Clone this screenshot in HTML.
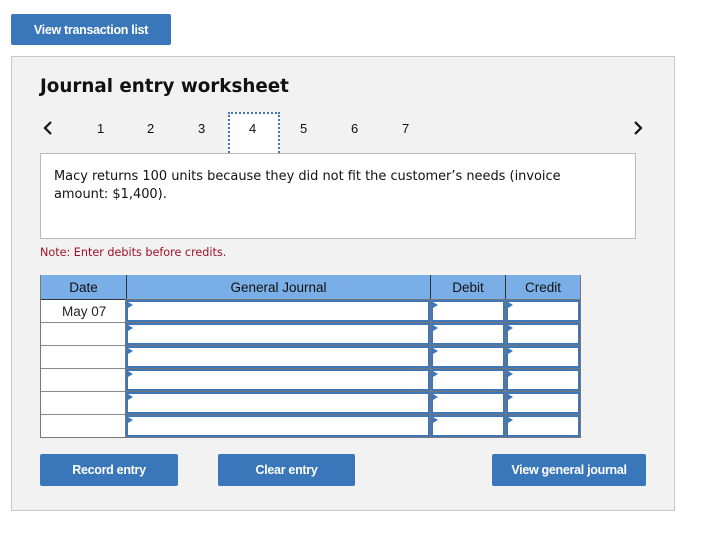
<!DOCTYPE html>
<html><head><style>
*{margin:0;padding:0;box-sizing:border-box}
body{width:709px;height:538px;background:#fff;position:relative;overflow:hidden;font-family:"Liberation Sans",Arial,sans-serif}
.btn{position:absolute;background:#3a76ba;color:#fff;font-weight:bold;font-size:12.5px;border-radius:2px;display:flex;align-items:center;justify-content:center;letter-spacing:-0.3px}
.a{position:absolute}
.num{position:absolute;top:121px;font-size:13px;color:#111}
.inp{position:absolute;border:2px solid #3f76b8;background:#fff}
.inp:before{content:"";position:absolute;left:0;top:0;border-left:5px solid #3f76b8;border-top:3px solid transparent;border-bottom:3px solid transparent}
.h{position:absolute;top:275px;height:24px;background:#7aaee6;font-size:13.5px;color:#111;display:flex;align-items:center;justify-content:center;border-right:1px solid #333}
</style></head><body>
<div class="btn" style="left:11px;top:14px;width:160px;height:31px">View transaction list</div>
<div class="a" style="left:11px;top:56px;width:664px;height:455px;background:#f2f2f2;border:1px solid #c8c8c8"></div>
<div class="a" style="left:40px;top:76px;font-family:'DejaVu Sans',Verdana,sans-serif;font-weight:bold;font-size:18.3px;color:#111">Journal entry worksheet</div>
<svg class="a" style="left:42px;top:120px" width="12" height="16"><path d="M9 2 L3 8 L9 14" stroke="#111" stroke-width="2.2" fill="none"/></svg>
<svg class="a" style="left:632px;top:120px" width="12" height="16"><path d="M3 2 L9 8 L3 14" stroke="#111" stroke-width="2.2" fill="none"/></svg>
<div class="num" style="left:97px">1</div>
<div class="num" style="left:147px">2</div>
<div class="num" style="left:198px">3</div>
<div class="a" style="left:228px;top:112px;width:52px;height:44px;background:#fff;border:2px dotted #3f76b8"></div>
<div class="num" style="left:249px">4</div>
<div class="num" style="left:300px">5</div>
<div class="num" style="left:351px">6</div>
<div class="num" style="left:402px">7</div>
<div class="a" style="left:40px;top:153px;width:596px;height:86px;background:#fff;border:1px solid #bbb;padding:14px 50px 14px 13px;font-family:'DejaVu Sans',Verdana,sans-serif;font-size:12.95px;line-height:18px;color:#111">Macy returns 100 units because they did not fit the customer’s needs (invoice amount: $1,400).</div>
<div class="a" style="left:40px;top:246px;font-family:'DejaVu Sans',Verdana,sans-serif;font-size:11.2px;color:#a0102a">Note: Enter debits before credits.</div>
<div class="a" style="left:40px;top:275px;width:541px;height:163px;background:#fff;border:1px solid #777"></div>
<div class="h" style="left:41px;width:86px">Date</div>
<div class="h" style="left:127px;width:304px">General Journal</div>
<div class="h" style="left:431px;width:75px">Debit</div>
<div class="h" style="left:506px;width:74px;border-right:none">Credit</div>
<div class="a" style="left:41px;top:299px;width:539px;height:1px;background:#333"></div>
<div class="a" style="left:62px;top:304px;font-size:13.5px;color:#222">May 07</div>
<div id="rows"></div>
<script>
var h='';var ys=[299,322,345,368,391,414];
ys.forEach(function(y,i){
 if(i>0)h+='<div class="a" style="left:41px;top:'+y+'px;width:85px;height:1px;background:#888"></div>';
 h+='<div class="a" style="left:125px;top:'+y+'px;width:456px;height:24px;background:#777"></div>';
 h+='<div class="inp" style="left:126px;top:'+(y+1)+'px;width:304px;height:22px"></div>';
 h+='<div class="inp" style="left:431px;top:'+(y+1)+'px;width:74px;height:22px"></div>';
 h+='<div class="inp" style="left:506px;top:'+(y+1)+'px;width:74px;height:22px"></div>';
});
document.getElementById('rows').innerHTML=h;
</script>
<div class="btn" style="left:40px;top:454px;width:138px;height:32px">Record entry</div>
<div class="btn" style="left:218px;top:454px;width:137px;height:32px">Clear entry</div>
<div class="btn" style="left:492px;top:454px;width:154px;height:32px">View general journal</div>
</body></html>
